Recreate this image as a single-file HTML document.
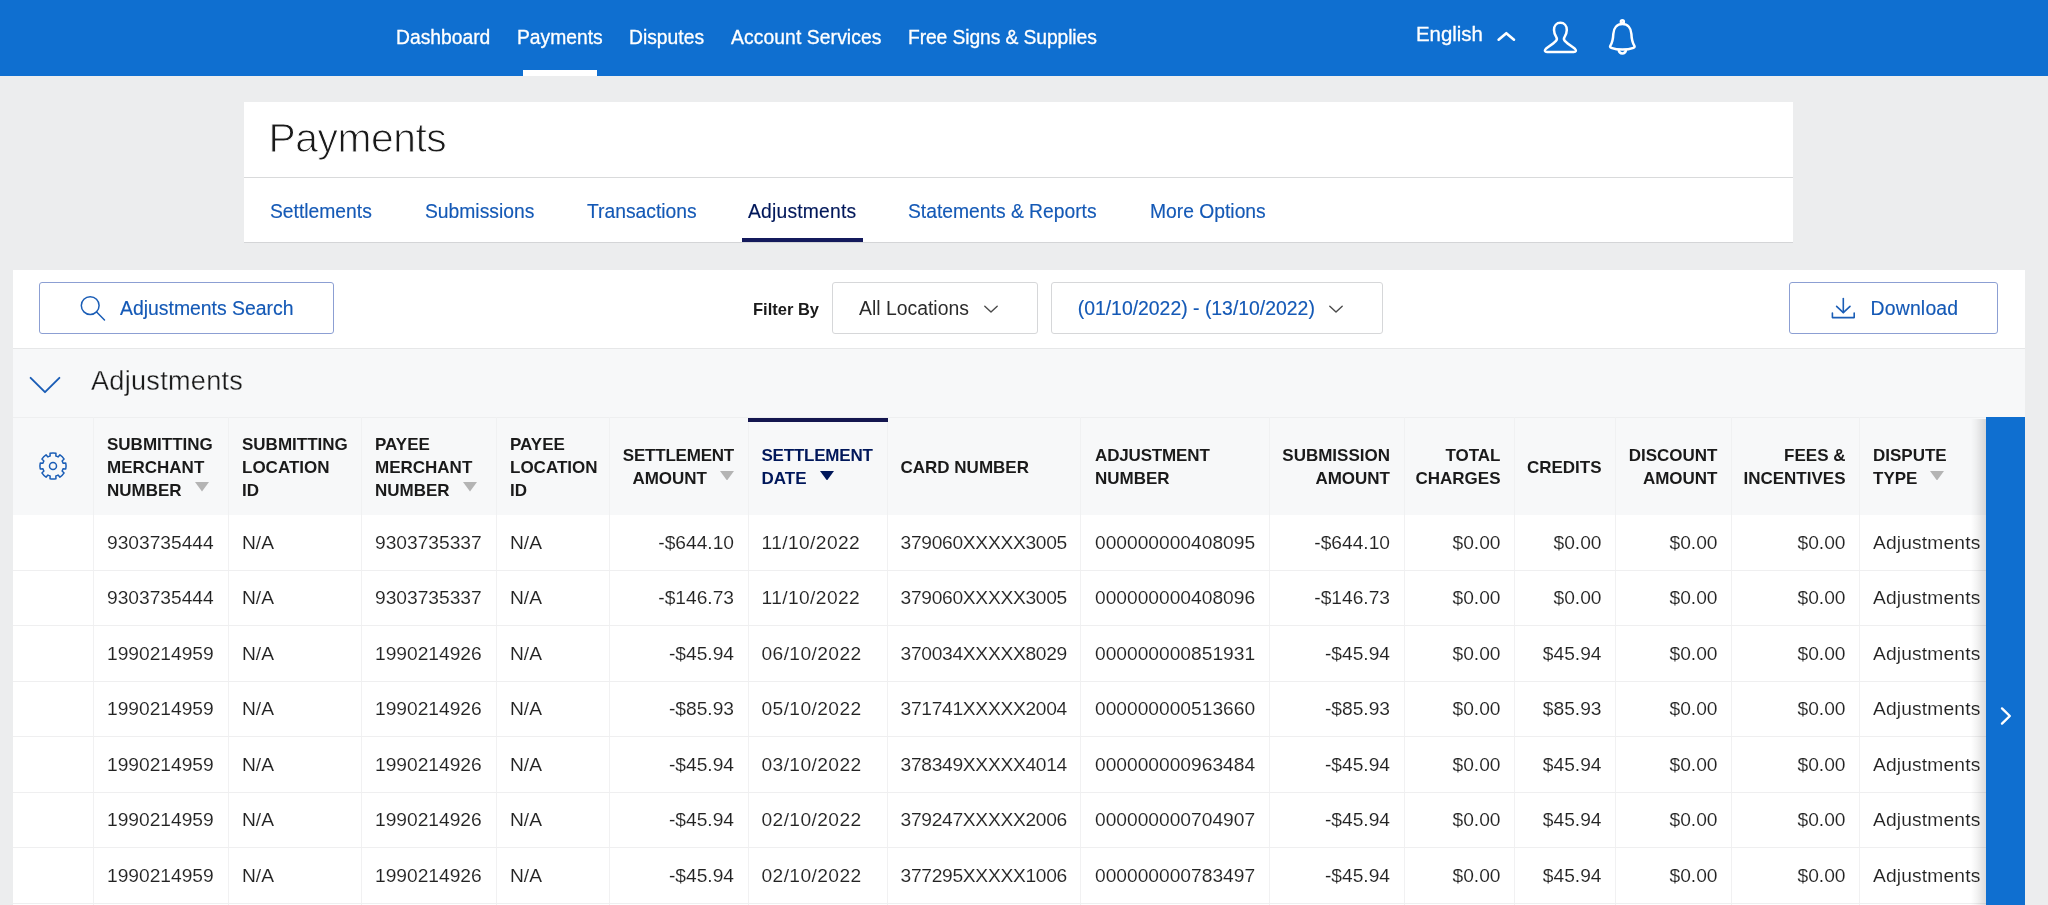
<!DOCTYPE html>
<html lang="en">
<head>
<meta charset="utf-8">
<title>Payments - Adjustments</title>
<style>
*{box-sizing:border-box;margin:0;padding:0}
html,body{width:2048px;height:905px;overflow:hidden}
body{position:relative;background:#ecedee;font-family:"Liberation Sans",sans-serif;color:#333;}
.abs{position:absolute;white-space:nowrap}
svg{display:block}
#wrap{position:absolute;left:0;top:0;width:2048px;height:905px;will-change:transform}

/* top nav */
#nav{position:absolute;left:0;top:0;width:2048px;height:76px;background:#0f6fd0}
#nav .it{position:absolute;top:27px;font-size:19.3px;line-height:22px;color:#fff;white-space:nowrap;-webkit-text-stroke:.3px #fff}
#nav .ul{position:absolute;left:523px;top:70px;width:74px;height:6px;background:#fff}

/* title card */
#card{position:absolute;left:244px;top:102px;width:1549px;height:141px;background:#fff;border-bottom:1px solid #d4d5d7}
#card .ttl{position:absolute;left:24.500px;top:14px;font-size:40.800px;letter-spacing:-.45px;line-height:44px;color:#1a1a1a;white-space:nowrap;-webkit-text-stroke:1px #fff}
#card .div{position:absolute;left:0;top:75px;width:100%;height:1px;background:#d9dadb}
#card .tab{position:absolute;top:99px;font-size:19.3px;line-height:22px;color:#1459b6;white-space:nowrap;-webkit-text-stroke:.15px #1459b6}
#card .tab.on{color:#00175a;-webkit-text-stroke:.15px #00175a}
#card .tul{position:absolute;left:498px;top:136px;width:121px;height:4px;background:#141a5c}

/* main panel */
#panel{position:absolute;left:13px;top:270px;width:2012px;height:640px;background:#f7f8f9}
#tool{position:absolute;left:0;top:0;width:100%;height:79px;background:#fff;border-bottom:1px solid #e6e7e8}
.btn{position:absolute;top:12px;height:52px;border:1px solid #8c9fd3;border-radius:3px;background:#fff}
.dd{position:absolute;top:12px;height:52px;border:1px solid #d6d7d9;border-radius:3px;background:#fff}
.t19{position:absolute;font-size:19.4px;line-height:22px;white-space:nowrap}
.blue{color:#1459b6;-webkit-text-stroke:.15px #1459b6}

#sect{position:absolute;left:78px;top:96px;font-size:27.100px;letter-spacing:.28px;line-height:30px;color:#1a1a1a;white-space:nowrap;-webkit-text-stroke:.3px #f7f8f9}

/* table */
#thead{position:absolute;left:0;top:147px;width:100%;height:98px;background:#f7f8f9;border-top:1px solid #eeeff0}
.hc{position:absolute;top:-1px;height:98px;border-right:1px solid #f0f1f2;padding:0 13px;display:flex;align-items:center;
  font-weight:bold;font-size:17px;line-height:23px;color:#1a1a1a;white-space:nowrap}
.hc.r{justify-content:flex-end;text-align:right}
.hc.g{padding:0;justify-content:center}
.hc.g svg{margin-left:-1px}
.hc .in{position:relative;top:1px}
.hc.g .in{top:0}
.hc.sorted{color:#00175a}
#sbar{position:absolute;left:735px;top:0;width:140px;height:4px;background:#14164f}
.ar{display:inline-block;fill:#b4b4b4;margin-left:13px;position:relative;top:-3.750px}
.sorted .ar{fill:#00175a}
.row{position:absolute;left:0;width:100%;height:56px;background:#fff}
.rd{position:absolute;left:0;width:100%;height:1px;background:#efeff0}
.dc{position:absolute;top:0;height:100%;border-right:1px solid #f1f1f2;padding:0 13px;font-size:19.2px;line-height:55.5px;white-space:nowrap;color:#222;overflow:hidden;-webkit-text-stroke:.1px #fff}
.dc.r{text-align:right}

#bar{position:absolute;left:1986px;top:417px;width:39px;height:500px;background:#0f6fd0}
#bsh{position:absolute;left:1971px;top:419px;width:15px;height:500px;background:linear-gradient(to right,rgba(0,0,0,0),rgba(0,0,0,.04) 35%,rgba(0,0,0,.14))}
</style>
</head>
<body>

<div id="wrap">
<div id="nav">
 <div class="it" style="left:396px">Dashboard</div>
 <div class="it" style="left:517px">Payments</div>
 <div class="it" style="left:629px">Disputes</div>
 <div class="it" style="left:731px;letter-spacing:.1px">Account Services</div>
 <div class="it" style="left:908px;letter-spacing:-.1px">Free Signs &amp; Supplies</div>
 <div class="ul"></div>
 <div class="it" style="left:1416px;top:22px;font-size:20.4px;line-height:24px">English</div>
 <svg class="abs" style="left:1494px;top:28px" width="26" height="18" viewBox="0 0 26 18"><path d="M4.6 11.700L12.300 5.200L20 11.700" fill="none" stroke="#fff" stroke-width="2.6" stroke-linecap="round" stroke-linejoin="round"/></svg>
 <!-- user -->
 <svg class="abs" style="left:1540px;top:18px" width="40" height="40" viewBox="0 0 40 40"><path d="M20.4 4.800C16.600 4.800 14 7.900 14 12C14 15.200 15.200 17.500 16.400 19.400C17 20.400 17 21.800 16 22.800C14.500 24.500 11 27 7.500 29.500C5.500 31 4.600 32 5 33C5.300 33.700 6 33.900 7 33.900H33.800C34.800 33.900 35.500 33.700 35.800 33C36.200 32 35.300 31 33.300 29.500C29.800 27 26.300 24.500 24.800 22.800C23.800 21.800 23.800 20.400 24.400 19.400C25.600 17.500 26.800 15.200 26.800 12C26.800 7.900 24.200 4.800 20.400 4.800Z" fill="none" stroke="#fff" stroke-width="2.5" stroke-linejoin="round"/></svg>
 <!-- bell -->
 <svg class="abs" style="left:1602px;top:16px" width="40" height="42" viewBox="0 0 40 42"><g fill="none" stroke="#fff" stroke-width="2.5" stroke-linejoin="round" stroke-linecap="round"><path d="M20.350 8.100C15 8.100 11.600 12 11.300 18C11.100 23 10.400 26.500 8.400 29.600C7.800 30.600 8 31.400 9.200 31.800C12.500 33 16.500 33.600 20.350 33.600C24.200 33.600 28.200 33 31.500 31.800C32.700 31.400 32.900 30.600 32.300 29.600C30.300 26.500 29.600 23 29.400 18C29.100 12 25.700 8.100 20.350 8.100Z"/><circle cx="20.350" cy="5.700" r="1.500"/><path d="M16.700 34.300A3.700 3.700 0 0 0 24 34.300"/></g></svg>
</div>

<div id="card">
 <div class="ttl">Payments</div>
 <div class="div"></div>
 <div class="tab" style="left:26px">Settlements</div>
 <div class="tab" style="left:181px">Submissions</div>
 <div class="tab" style="left:343px">Transactions</div>
 <div class="tab on" style="left:504px;letter-spacing:.2px">Adjustments</div>
 <div class="tab" style="left:664px">Statements &amp; Reports</div>
 <div class="tab" style="left:906px">More Options</div>
 <div class="tul"></div>
</div>

<div id="panel">
 <div id="tool">
  <div class="btn" style="left:26px;width:295px"></div>
  <svg class="abs" style="left:64px;top:23px" width="32" height="32" viewBox="0 0 32 32"><g fill="none" stroke="#1a5db6" stroke-width="1.5" stroke-linecap="round"><circle cx="13.2" cy="12.6" r="8.9"/><path d="M19.6 19L27.5 27"/></g></svg>
  <div class="t19 blue" style="left:107px;top:27px">Adjustments Search</div>

  <div class="abs" style="left:740px;top:29px;font-size:16.5px;line-height:20px;font-weight:bold;color:#1a1a1a">Filter By</div>
  <div class="dd" style="left:819px;width:206px"></div>
  <div class="t19" style="left:846px;top:27px;color:#2b2b2b">All Locations</div>
  <svg class="abs" style="left:968px;top:33px" width="20" height="12" viewBox="0 0 20 12"><path d="M3.800 3.300L10 9L16.200 3.300" fill="none" stroke="#4a4a4a" stroke-width="1.4" stroke-linecap="round" stroke-linejoin="round"/></svg>

  <div class="dd" style="left:1038px;width:332px"></div>
  <div class="t19 blue" style="left:1064.700px;top:27px">(01/10/2022) - (13/10/2022)</div>
  <svg class="abs" style="left:1313px;top:33px" width="20" height="12" viewBox="0 0 20 12"><path d="M3.800 3.300L10 9L16.200 3.300" fill="none" stroke="#4a4a4a" stroke-width="1.4" stroke-linecap="round" stroke-linejoin="round"/></svg>

  <div class="btn" style="left:1776px;width:209px"></div>
  <svg class="abs" style="left:1814px;top:22px" width="32" height="32" viewBox="0 0 32 32"><g fill="none" stroke="#1a5db6" stroke-width="1.6" stroke-linecap="round" stroke-linejoin="round"><path d="M16.300 6.600V20.400"/><path d="M9.600 14.300L16.300 20.600L23 14.300"/><path d="M5.400 21V25.600H27.200V21"/></g></svg>
  <div class="t19 blue" style="left:1857.500px;top:27px;letter-spacing:.2px">Download</div>
 </div>

 <svg class="abs" style="left:14px;top:104px" width="36" height="22" viewBox="0 0 36 22"><path d="M3.600 3.800L18 18.200L32.400 3.800" fill="none" stroke="#1a5db6" stroke-width="1.9" stroke-linecap="round" stroke-linejoin="round"/></svg>
 <div id="sect">Adjustments</div>

 <div id="thead">
<div class="hc l g" style="left:0px;width:81px"><div class="in"><svg class="gear" width="30" height="30" viewBox="0 0 30 30"><g fill="none" stroke="#1a5db6" stroke-width="1.5" stroke-linejoin="round"><path d="M12.13 5.00L12.05 2.24A13.10 13.10 0 0 1 17.95 2.24L17.87 5.00A10.40 10.40 0 0 1 20.04 5.90L21.94 3.89A13.10 13.10 0 0 1 26.11 8.06L24.10 9.96A10.40 10.40 0 0 1 25.00 12.13L27.76 12.05A13.10 13.10 0 0 1 27.76 17.95L25.00 17.87A10.40 10.40 0 0 1 24.10 20.04L26.11 21.94A13.10 13.10 0 0 1 21.94 26.11L20.04 24.10A10.40 10.40 0 0 1 17.87 25.00L17.95 27.76A13.10 13.10 0 0 1 12.05 27.76L12.13 25.00A10.40 10.40 0 0 1 9.96 24.10L8.06 26.11A13.10 13.10 0 0 1 3.89 21.94L5.90 20.04A10.40 10.40 0 0 1 5.00 17.87L2.24 17.95A13.10 13.10 0 0 1 2.24 12.05L5.00 12.13A10.40 10.40 0 0 1 5.90 9.96L3.89 8.06A13.10 13.10 0 0 1 8.06 3.89L9.96 5.90A10.40 10.40 0 0 1 12.13 5.00 Z"/> <circle cx="15" cy="15" r="3.5"/></g></svg></div></div>
<div class="hc l" style="left:81px;width:135px"><div class="in">SUBMITTING<br>MERCHANT<br>NUMBER<svg class="ar" width="14" height="9.5" viewBox="0 0 14 9.5"><path d="M0 0H14L7 9.5Z"/></svg></div></div>
<div class="hc l" style="left:216px;width:133px"><div class="in">SUBMITTING<br>LOCATION<br>ID</div></div>
<div class="hc l" style="left:349px;width:135px"><div class="in">PAYEE<br>MERCHANT<br>NUMBER<svg class="ar" width="14" height="9.5" viewBox="0 0 14 9.5"><path d="M0 0H14L7 9.5Z"/></svg></div></div>
<div class="hc l" style="left:484px;width:113px"><div class="in">PAYEE<br>LOCATION<br>ID</div></div>
<div class="hc r" style="left:597px;width:139px;padding-left:12px;padding-right:14px"><div class="in"><span style="letter-spacing:-.22px">SETTLEMENT</span><br>AMOUNT<svg class="ar" width="14" height="9.5" viewBox="0 0 14 9.5"><path d="M0 0H14L7 9.5Z"/></svg></div></div>
<div class="hc l sorted" style="left:736px;width:139px;padding-left:12.5px;padding-right:13.5px"><div class="in"><span style="letter-spacing:-.22px">SETTLEMENT</span><br>DATE<svg class="ar" width="14" height="9.5" viewBox="0 0 14 9.5"><path d="M0 0H14L7 9.5Z"/></svg></div></div>
<div class="hc l" style="left:875px;width:193px;padding-left:12.5px;padding-right:13.5px"><div class="in">CARD NUMBER</div></div>
<div class="hc l" style="left:1068px;width:189px;padding-left:14px;padding-right:12px"><div class="in"><span style="letter-spacing:-.15px">ADJUSTMENT</span><br>NUMBER</div></div>
<div class="hc r" style="left:1257px;width:135px;padding-left:12px;padding-right:14px"><div class="in">SUBMISSION<br>AMOUNT</div></div>
<div class="hc r" style="left:1392px;width:110px;padding-left:12.5px;padding-right:13.5px"><div class="in">TOTAL<br>CHARGES</div></div>
<div class="hc r" style="left:1502px;width:101px;padding-left:12.5px;padding-right:13.5px"><div class="in">CREDITS</div></div>
<div class="hc r" style="left:1603px;width:116px;padding-left:12.5px;padding-right:13.5px"><div class="in">DISCOUNT<br>AMOUNT</div></div>
<div class="hc r" style="left:1719px;width:128px;padding-left:12.5px;padding-right:13.5px"><div class="in">FEES &amp;<br>INCENTIVES</div></div>
<div class="hc l" style="left:1847px;width:165px"><div class="in">DISPUTE<br>TYPE<svg class="ar" width="14" height="9.5" viewBox="0 0 14 9.5"><path d="M0 0H14L7 9.5Z"/></svg></div></div>
  <div id="sbar"></div>
 </div>
 <div id="tbody" style="position:absolute;left:0;top:147px;width:100%">
<div class="row" style="top:97.5px"><div class="dc" style="left:0;width:81px"></div><div class="dc l" style="left:81px;width:135px">9303735444</div><div class="dc l" style="left:216px;width:133px">N/A</div><div class="dc l" style="left:349px;width:135px">9303735337</div><div class="dc l" style="left:484px;width:113px">N/A</div><div class="dc r" style="left:597px;width:139px;padding-left:12px;padding-right:14px">-$644.10</div><div class="dc l" style="left:736px;width:139px;letter-spacing:0.4px;padding-left:12.5px;padding-right:13.5px">11/10/2022</div><div class="dc l" style="left:875px;width:193px;letter-spacing:-0.28px;padding-left:12.5px;padding-right:13.5px">379060XXXXX3005</div><div class="dc l" style="left:1068px;width:189px;padding-left:14px;padding-right:12px">000000000408095</div><div class="dc r" style="left:1257px;width:135px;padding-left:12px;padding-right:14px">-$644.10</div><div class="dc r" style="left:1392px;width:110px;padding-left:12.5px;padding-right:13.5px">$0.00</div><div class="dc r" style="left:1502px;width:101px;padding-left:12.5px;padding-right:13.5px">$0.00</div><div class="dc r" style="left:1603px;width:116px;padding-left:12.5px;padding-right:13.5px">$0.00</div><div class="dc r" style="left:1719px;width:128px;padding-left:12.5px;padding-right:13.5px">$0.00</div><div class="dc l" style="left:1847px;width:165px;letter-spacing:0.17px">Adjustments</div></div>
<div class="row" style="top:153.0px"><div class="dc" style="left:0;width:81px"></div><div class="dc l" style="left:81px;width:135px">9303735444</div><div class="dc l" style="left:216px;width:133px">N/A</div><div class="dc l" style="left:349px;width:135px">9303735337</div><div class="dc l" style="left:484px;width:113px">N/A</div><div class="dc r" style="left:597px;width:139px;padding-left:12px;padding-right:14px">-$146.73</div><div class="dc l" style="left:736px;width:139px;letter-spacing:0.4px;padding-left:12.5px;padding-right:13.5px">11/10/2022</div><div class="dc l" style="left:875px;width:193px;letter-spacing:-0.28px;padding-left:12.5px;padding-right:13.5px">379060XXXXX3005</div><div class="dc l" style="left:1068px;width:189px;padding-left:14px;padding-right:12px">000000000408096</div><div class="dc r" style="left:1257px;width:135px;padding-left:12px;padding-right:14px">-$146.73</div><div class="dc r" style="left:1392px;width:110px;padding-left:12.5px;padding-right:13.5px">$0.00</div><div class="dc r" style="left:1502px;width:101px;padding-left:12.5px;padding-right:13.5px">$0.00</div><div class="dc r" style="left:1603px;width:116px;padding-left:12.5px;padding-right:13.5px">$0.00</div><div class="dc r" style="left:1719px;width:128px;padding-left:12.5px;padding-right:13.5px">$0.00</div><div class="dc l" style="left:1847px;width:165px;letter-spacing:0.17px">Adjustments</div></div>
<div class="row" style="top:208.5px"><div class="dc" style="left:0;width:81px"></div><div class="dc l" style="left:81px;width:135px">1990214959</div><div class="dc l" style="left:216px;width:133px">N/A</div><div class="dc l" style="left:349px;width:135px">1990214926</div><div class="dc l" style="left:484px;width:113px">N/A</div><div class="dc r" style="left:597px;width:139px;padding-left:12px;padding-right:14px">-$45.94</div><div class="dc l" style="left:736px;width:139px;letter-spacing:0.4px;padding-left:12.5px;padding-right:13.5px">06/10/2022</div><div class="dc l" style="left:875px;width:193px;letter-spacing:-0.28px;padding-left:12.5px;padding-right:13.5px">370034XXXXX8029</div><div class="dc l" style="left:1068px;width:189px;padding-left:14px;padding-right:12px">000000000851931</div><div class="dc r" style="left:1257px;width:135px;padding-left:12px;padding-right:14px">-$45.94</div><div class="dc r" style="left:1392px;width:110px;padding-left:12.5px;padding-right:13.5px">$0.00</div><div class="dc r" style="left:1502px;width:101px;padding-left:12.5px;padding-right:13.5px">$45.94</div><div class="dc r" style="left:1603px;width:116px;padding-left:12.5px;padding-right:13.5px">$0.00</div><div class="dc r" style="left:1719px;width:128px;padding-left:12.5px;padding-right:13.5px">$0.00</div><div class="dc l" style="left:1847px;width:165px;letter-spacing:0.17px">Adjustments</div></div>
<div class="row" style="top:264.0px"><div class="dc" style="left:0;width:81px"></div><div class="dc l" style="left:81px;width:135px">1990214959</div><div class="dc l" style="left:216px;width:133px">N/A</div><div class="dc l" style="left:349px;width:135px">1990214926</div><div class="dc l" style="left:484px;width:113px">N/A</div><div class="dc r" style="left:597px;width:139px;padding-left:12px;padding-right:14px">-$85.93</div><div class="dc l" style="left:736px;width:139px;letter-spacing:0.4px;padding-left:12.5px;padding-right:13.5px">05/10/2022</div><div class="dc l" style="left:875px;width:193px;letter-spacing:-0.28px;padding-left:12.5px;padding-right:13.5px">371741XXXXX2004</div><div class="dc l" style="left:1068px;width:189px;padding-left:14px;padding-right:12px">000000000513660</div><div class="dc r" style="left:1257px;width:135px;padding-left:12px;padding-right:14px">-$85.93</div><div class="dc r" style="left:1392px;width:110px;padding-left:12.5px;padding-right:13.5px">$0.00</div><div class="dc r" style="left:1502px;width:101px;padding-left:12.5px;padding-right:13.5px">$85.93</div><div class="dc r" style="left:1603px;width:116px;padding-left:12.5px;padding-right:13.5px">$0.00</div><div class="dc r" style="left:1719px;width:128px;padding-left:12.5px;padding-right:13.5px">$0.00</div><div class="dc l" style="left:1847px;width:165px;letter-spacing:0.17px">Adjustments</div></div>
<div class="row" style="top:319.5px"><div class="dc" style="left:0;width:81px"></div><div class="dc l" style="left:81px;width:135px">1990214959</div><div class="dc l" style="left:216px;width:133px">N/A</div><div class="dc l" style="left:349px;width:135px">1990214926</div><div class="dc l" style="left:484px;width:113px">N/A</div><div class="dc r" style="left:597px;width:139px;padding-left:12px;padding-right:14px">-$45.94</div><div class="dc l" style="left:736px;width:139px;letter-spacing:0.4px;padding-left:12.5px;padding-right:13.5px">03/10/2022</div><div class="dc l" style="left:875px;width:193px;letter-spacing:-0.28px;padding-left:12.5px;padding-right:13.5px">378349XXXXX4014</div><div class="dc l" style="left:1068px;width:189px;padding-left:14px;padding-right:12px">000000000963484</div><div class="dc r" style="left:1257px;width:135px;padding-left:12px;padding-right:14px">-$45.94</div><div class="dc r" style="left:1392px;width:110px;padding-left:12.5px;padding-right:13.5px">$0.00</div><div class="dc r" style="left:1502px;width:101px;padding-left:12.5px;padding-right:13.5px">$45.94</div><div class="dc r" style="left:1603px;width:116px;padding-left:12.5px;padding-right:13.5px">$0.00</div><div class="dc r" style="left:1719px;width:128px;padding-left:12.5px;padding-right:13.5px">$0.00</div><div class="dc l" style="left:1847px;width:165px;letter-spacing:0.17px">Adjustments</div></div>
<div class="row" style="top:375.0px"><div class="dc" style="left:0;width:81px"></div><div class="dc l" style="left:81px;width:135px">1990214959</div><div class="dc l" style="left:216px;width:133px">N/A</div><div class="dc l" style="left:349px;width:135px">1990214926</div><div class="dc l" style="left:484px;width:113px">N/A</div><div class="dc r" style="left:597px;width:139px;padding-left:12px;padding-right:14px">-$45.94</div><div class="dc l" style="left:736px;width:139px;letter-spacing:0.4px;padding-left:12.5px;padding-right:13.5px">02/10/2022</div><div class="dc l" style="left:875px;width:193px;letter-spacing:-0.28px;padding-left:12.5px;padding-right:13.5px">379247XXXXX2006</div><div class="dc l" style="left:1068px;width:189px;padding-left:14px;padding-right:12px">000000000704907</div><div class="dc r" style="left:1257px;width:135px;padding-left:12px;padding-right:14px">-$45.94</div><div class="dc r" style="left:1392px;width:110px;padding-left:12.5px;padding-right:13.5px">$0.00</div><div class="dc r" style="left:1502px;width:101px;padding-left:12.5px;padding-right:13.5px">$45.94</div><div class="dc r" style="left:1603px;width:116px;padding-left:12.5px;padding-right:13.5px">$0.00</div><div class="dc r" style="left:1719px;width:128px;padding-left:12.5px;padding-right:13.5px">$0.00</div><div class="dc l" style="left:1847px;width:165px;letter-spacing:0.17px">Adjustments</div></div>
<div class="row" style="top:430.5px"><div class="dc" style="left:0;width:81px"></div><div class="dc l" style="left:81px;width:135px">1990214959</div><div class="dc l" style="left:216px;width:133px">N/A</div><div class="dc l" style="left:349px;width:135px">1990214926</div><div class="dc l" style="left:484px;width:113px">N/A</div><div class="dc r" style="left:597px;width:139px;padding-left:12px;padding-right:14px">-$45.94</div><div class="dc l" style="left:736px;width:139px;letter-spacing:0.4px;padding-left:12.5px;padding-right:13.5px">02/10/2022</div><div class="dc l" style="left:875px;width:193px;letter-spacing:-0.28px;padding-left:12.5px;padding-right:13.5px">377295XXXXX1006</div><div class="dc l" style="left:1068px;width:189px;padding-left:14px;padding-right:12px">000000000783497</div><div class="dc r" style="left:1257px;width:135px;padding-left:12px;padding-right:14px">-$45.94</div><div class="dc r" style="left:1392px;width:110px;padding-left:12.5px;padding-right:13.5px">$0.00</div><div class="dc r" style="left:1502px;width:101px;padding-left:12.5px;padding-right:13.5px">$45.94</div><div class="dc r" style="left:1603px;width:116px;padding-left:12.5px;padding-right:13.5px">$0.00</div><div class="dc r" style="left:1719px;width:128px;padding-left:12.5px;padding-right:13.5px">$0.00</div><div class="dc l" style="left:1847px;width:165px;letter-spacing:0.17px">Adjustments</div></div>
<div class="row" style="top:486.0px"><div class="dc" style="left:0;width:81px"></div><div class="dc l" style="left:81px;width:135px">1990214959</div><div class="dc l" style="left:216px;width:133px">N/A</div><div class="dc l" style="left:349px;width:135px">1990214926</div><div class="dc l" style="left:484px;width:113px">N/A</div><div class="dc r" style="left:597px;width:139px;padding-left:12px;padding-right:14px">-$45.94</div><div class="dc l" style="left:736px;width:139px;letter-spacing:0.4px;padding-left:12.5px;padding-right:13.5px">01/10/2022</div><div class="dc l" style="left:875px;width:193px;letter-spacing:-0.28px;padding-left:12.5px;padding-right:13.5px">377295XXXXX1006</div><div class="dc l" style="left:1068px;width:189px;padding-left:14px;padding-right:12px">000000000783498</div><div class="dc r" style="left:1257px;width:135px;padding-left:12px;padding-right:14px">-$45.94</div><div class="dc r" style="left:1392px;width:110px;padding-left:12.5px;padding-right:13.5px">$0.00</div><div class="dc r" style="left:1502px;width:101px;padding-left:12.5px;padding-right:13.5px">$45.94</div><div class="dc r" style="left:1603px;width:116px;padding-left:12.5px;padding-right:13.5px">$0.00</div><div class="dc r" style="left:1719px;width:128px;padding-left:12.5px;padding-right:13.5px">$0.00</div><div class="dc l" style="left:1847px;width:165px;letter-spacing:0.17px">Adjustments</div></div>
<div class="rd" style="top:153px"></div>
<div class="rd" style="top:208px"></div>
<div class="rd" style="top:264px"></div>
<div class="rd" style="top:319px"></div>
<div class="rd" style="top:375px"></div>
<div class="rd" style="top:430px"></div>
<div class="rd" style="top:486px"></div>
 </div>
</div>

<div id="bsh"></div>
<div id="bar">
 <svg class="abs" style="left:10px;top:286px" width="20" height="26" viewBox="0 0 20 26"><path d="M6 5.400L13.800 13L6 20.600" fill="none" stroke="#fff" stroke-width="2.4" stroke-linecap="round" stroke-linejoin="round"/></svg>
</div>
</div>
</body>
</html>
